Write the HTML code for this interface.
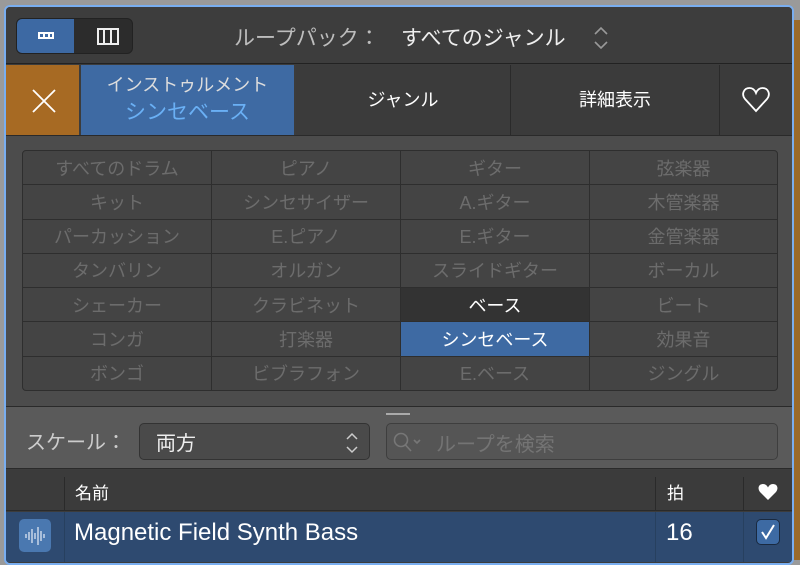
<!DOCTYPE html><html><head><meta charset="utf-8"><style>
*{margin:0;padding:0;box-sizing:border-box}
body{width:800px;height:558px;overflow:hidden;background:#9a9a9a;font-family:"Liberation Sans","Noto Sans CJK JP",sans-serif;position:relative}
.win{position:absolute;left:4px;top:5px;width:790px;height:560px;border:2px solid #79aef0;border-radius:6px;background:#3c3c3c;overflow:hidden}
.a{position:absolute}
.grid{position:absolute;left:16px;top:143px;width:756px;height:241px;border:1px solid #2e2e2e;border-radius:4px;overflow:hidden;display:grid;grid-template-columns:188px 188px 188px 1fr;grid-template-rows:repeat(7,1fr);background:#2e2e2e;gap:1px}
.grid div{background:#444;color:#6c6c6c;font-size:18px;display:flex;align-items:center;justify-content:center}
</style></head><body>
<div class="a" style="right:0;top:20px;width:6px;height:540px;background:#9a6a2a"></div>
<div class="win">
 <div class="a" style="left:0;top:0;width:786px;height:57px;background:#3d3d3d;border-bottom:1px solid #222"></div>
 <div class="a" style="left:10px;top:11px;width:117px;height:36px;border-radius:6px;background:#2c2c2c;border:1px solid #222;overflow:hidden">
  <div class="a" style="left:0;top:0;width:57px;height:34px;background:#3d69a3"></div>
  <div class="a" style="left:21px;top:13px;width:16px;height:7px;border:2px solid #fff"></div>
  <div class="a" style="left:26px;top:13px;width:2px;height:7px;background:#fff"></div>
  <div class="a" style="left:31px;top:13px;width:2px;height:7px;background:#fff"></div>
  <div class="a" style="left:80px;top:9px;width:22px;height:17px;border:2px solid #eee"></div>
  <div class="a" style="left:86px;top:9px;width:2px;height:17px;background:#eee"></div>
  <div class="a" style="left:93px;top:9px;width:2px;height:17px;background:#eee"></div>
 </div>
 <div class="a" style="left:228px;top:15px;font-size:21px;color:#bdbdbd">ループパック：</div>
 <div class="a" style="left:395px;top:15px;font-size:21px;color:#eee">すべてのジャンル</div>
 <svg class="a" style="left:587px;top:18px" width="16" height="28"><path d="M2 9 L8 3 L14 9 M2 17 L8 23 L14 17" stroke="#999" stroke-width="1.6" fill="none"/></svg>
 <div class="a" style="left:0;top:58px;width:73px;height:70px;background:#a76a23"></div>
 <svg class="a" style="left:26px;top:82px" width="24" height="24"><path d="M1 1L23 23M23 1L1 23" stroke="#fff" stroke-width="1.8"/></svg>
 <div class="a" style="left:75px;top:58px;width:213px;height:70px;background:#3e6aa3"></div>
 <div class="a" style="left:75px;top:64px;width:213px;text-align:center;font-size:18px;color:#ddd">インストゥルメント</div>
 <div class="a" style="left:75px;top:89px;width:213px;text-align:center;font-size:21px;color:#6ab0f5">シンセベース</div>
 <div class="a" style="left:290px;top:58px;width:496px;height:70px;background:#3b3b3b"></div>
 <div class="a" style="left:504px;top:58px;width:1px;height:70px;background:#2a2a2a"></div>
 <div class="a" style="left:713px;top:58px;width:1px;height:70px;background:#2a2a2a"></div>
 <div class="a" style="left:290px;top:79px;width:214px;text-align:center;font-size:18px;color:#fff">ジャンル</div>
 <div class="a" style="left:505px;top:79px;width:208px;text-align:center;font-size:18px;color:#fff">詳細表示</div>
 <svg class="a" style="left:735px;top:79px" width="30" height="28"><path d="M15 25 L4 13 C0 8 3 2 8.5 2 C12 2 14 4.5 15 7 C16 4.5 18 2 21.5 2 C27 2 30 8 26 13 Z" stroke="#fff" stroke-width="1.8" fill="none"/></svg>
 <div class="a" style="left:0;top:128px;width:786px;height:272px;background:#4c4c4c;border-top:1px solid #2a2a2a;border-bottom:1px solid #2a2a2a"></div>
 <div class="grid">
  <div>すべてのドラム</div><div>ピアノ</div><div>ギター</div><div>弦楽器</div>
  <div>キット</div><div>シンセサイザー</div><div>A.ギター</div><div>木管楽器</div>
  <div>パーカッション</div><div>E.ピアノ</div><div>E.ギター</div><div>金管楽器</div>
  <div>タンバリン</div><div>オルガン</div><div>スライドギター</div><div>ボーカル</div>
  <div>シェーカー</div><div>クラビネット</div><div style="background:#333;color:#fff">ベース</div><div>ビート</div>
  <div>コンガ</div><div>打楽器</div><div style="background:#3e6aa3;color:#fff">シンセベース</div><div>効果音</div>
  <div>ボンゴ</div><div>ビブラフォン</div><div>E.ベース</div><div>ジングル</div>
 </div>
 <div class="a" style="left:0;top:400px;width:786px;height:62px;background:#5a5a5a;border-bottom:1px solid #2a2a2a"></div>
 <div class="a" style="left:380px;top:406px;width:24px;height:2px;background:#aaa"></div>
 <div class="a" style="left:20px;top:419px;font-size:20px;color:#ccc">スケール：</div>
 <div class="a" style="left:133px;top:416px;width:231px;height:37px;border-radius:5px;background:#4a4a4a;border:1px solid #333"></div>
 <div class="a" style="left:150px;top:420px;font-size:20px;color:#eee">両方</div>
 <svg class="a" style="left:338px;top:424px" width="16" height="24"><path d="M3 8 L8 3 L13 8 M3 16 L8 21 L13 16" stroke="#ccc" stroke-width="1.5" fill="none"/></svg>
 <div class="a" style="left:380px;top:416px;width:392px;height:37px;border-radius:5px;background:#555;border:1px solid #3e3e3e"></div>
 <svg class="a" style="left:386px;top:424px" width="34" height="22"><circle cx="9" cy="9" r="6.5" stroke="#777" stroke-width="1.6" fill="none"/><path d="M13.5 14 L19 20 M22 9 L25 12 L28 9" stroke="#777" stroke-width="1.6" fill="none"/></svg>
 <div class="a" style="left:430px;top:421px;font-size:20px;color:#747474">ループを検索</div>
 <div class="a" style="left:0;top:463px;width:786px;height:41px;background:#3b3b3b;border-bottom:1px solid #2a2a2a"></div>
 <div class="a" style="left:58px;top:470px;width:1px;height:34px;background:#2a2a2a"></div>
 <div class="a" style="left:649px;top:470px;width:1px;height:34px;background:#2a2a2a"></div>
 <div class="a" style="left:737px;top:470px;width:1px;height:34px;background:#2a2a2a"></div>
 <div class="a" style="left:69px;top:472px;font-size:17px;color:#fff">名前</div>
 <div class="a" style="left:661px;top:472px;font-size:17px;color:#fff">拍</div>
 <svg class="a" style="left:752px;top:476px" width="20" height="18"><path d="M10 17 L2 9 C-1 5 1 1 5 1 C7.5 1 9 2.5 10 4.5 C11 2.5 12.5 1 15 1 C19 1 21 5 18 9 Z" fill="#fff"/></svg>
 <div class="a" style="left:0;top:505px;width:786px;height:50px;background:#2e4a70"></div>
 <div class="a" style="left:58px;top:505px;width:1px;height:50px;background:#27405f"></div>
 <div class="a" style="left:649px;top:505px;width:1px;height:50px;background:#27405f"></div>
 <div class="a" style="left:737px;top:505px;width:1px;height:50px;background:#27405f"></div>
 <div class="a" style="left:13px;top:512px;width:32px;height:33px;border-radius:5px;background:#4a78b0"></div>
 <svg class="a" style="left:17px;top:518px" width="24" height="22"><path d="M3 9v4M6 7v8M9 4v14M12 8v6M15 2v18M18 6v10M21 9v4" stroke="#e8eef8" stroke-width="1.2"/></svg>
 <div class="a" style="left:68px;top:512px;font-size:24px;color:#fff">Magnetic Field Synth Bass</div>
 <div class="a" style="left:660px;top:512px;font-size:24px;color:#fff">16</div>
 <div class="a" style="left:750px;top:512px;width:24px;height:26px;border-radius:5px;background:#3d6aa3;border:1px solid #1a2a40"></div>
 <svg class="a" style="left:753px;top:516px" width="18" height="18"><path d="M3 9 L7 15 L15 2" stroke="#fff" stroke-width="2" fill="none"/></svg>
</div>
</body></html>
